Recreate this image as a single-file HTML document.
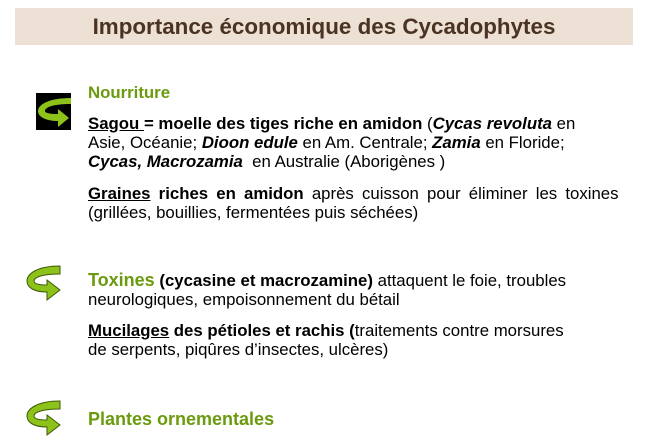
<!DOCTYPE html>
<html><head><meta charset="utf-8"><style>
body{margin:0;width:654px;height:444px;background:#fff;position:relative;overflow:hidden;font-family:"Liberation Sans",Arial,sans-serif;color:#000}
.bar{position:absolute;left:15px;top:8px;width:618px;height:37px;background:#ede1d5}
.title{position:absolute;left:15px;top:8px;width:618px;line-height:37px;text-align:center;font-size:22.4px;font-weight:bold;color:#4a3322}
.t{position:absolute;left:88px;font-size:16.8px;line-height:19px;white-space:nowrap}
.g{color:#6b9a0e;font-weight:bold}
svg{position:absolute}
</style></head><body>
<div class="bar"></div><div class="title">Importance économique des Cycadophytes</div>

<svg style="left:36px;top:93px" width="35" height="37" viewBox="0 0 35 37">
<rect width="35" height="37" fill="#000"/>
<path d="M35 5 C12 5 2 12 2 18 C2 24 10 28 22 28 L22 34 L33 25 L22 16 L22 21 C14 21 9 20 9 18 C9 14 18 11 35 11 Z" fill="#8cc21a"/>
</svg>
<svg style="left:25px;top:264px" width="37" height="40" viewBox="0 0 37 40">
<path d="M35 2 C12 2 2 10 2 17 C2 24 10 28 22 28 L22 36 L35 26 L22 16 L22 21 C14 21 9 20 9 17 C9 13 18 10 35 10 Z" fill="#8cc21a" stroke="#3d5a08" stroke-width="1"/>
</svg>
<svg style="left:25px;top:399px" width="37" height="40" viewBox="0 0 37 40">
<path d="M35 2 C12 2 2 10 2 17 C2 24 10 28 22 28 L22 36 L35 26 L22 16 L22 21 C14 21 9 20 9 17 C9 13 18 10 35 10 Z" fill="#8cc21a" stroke="#3d5a08" stroke-width="1"/>
</svg>

<div class="t g" style="top:83px">Nourriture</div>
<div class="t" style="top:114px"><b><u>Sagou </u>= moelle des tiges riche en amidon</b> (<b><i>Cycas revoluta</i></b> en</div>
<div class="t" style="top:133px">Asie, Océanie; <b><i>Dioon edule</i></b> en Am. Centrale; <b><i>Zamia</i></b> en Floride;</div>
<div class="t" style="top:152px"><b><i>Cycas, Macrozamia</i></b>&nbsp; en Australie (Aborigènes )</div>
<div class="t" style="top:184px;word-spacing:3.5px"><b><u>Graines</u> riches en amidon</b> après cuisson pour éliminer les toxines</div>
<div class="t" style="top:203px">(grillées, bouillies, fermentées puis séchées)</div>

<div class="t" style="top:271px"><span class="g" style="font-size:18px">Toxines</span> <b>(cycasine et macrozamine)</b> attaquent le foie, troubles</div>
<div class="t" style="top:290px">neurologiques, empoisonnement du bétail</div>
<div class="t" style="top:321px"><b><u>Mucilages</u> des pétioles et rachis (</b>traitements contre morsures</div>
<div class="t" style="top:340px">de serpents, piqûres d’insectes, ulcères)</div>

<div class="t g" style="top:408px;font-size:18px;line-height:22px">Plantes ornementales</div>
</body></html>
